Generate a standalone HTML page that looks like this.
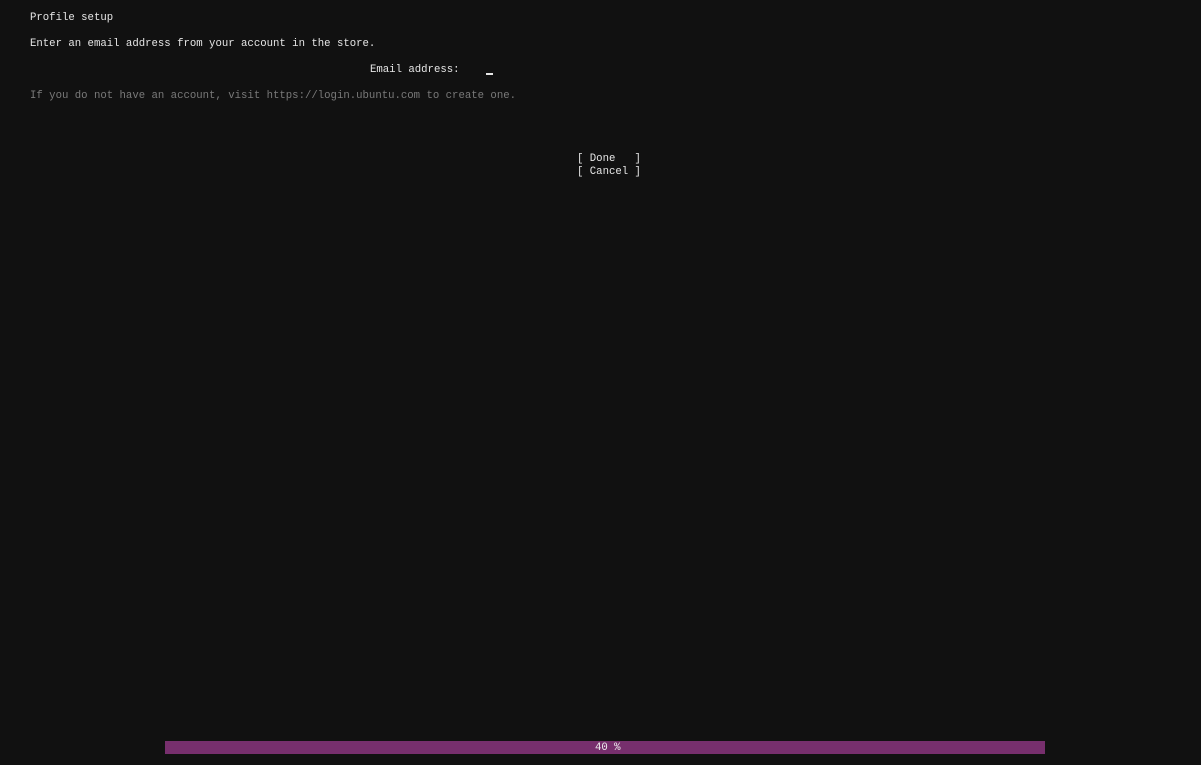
<!DOCTYPE html>
<html><head><style>
body{margin:0;width:1201px;height:765px;background:#111;overflow:hidden;position:relative;font-family:"Liberation Mono",monospace;font-size:10.67px;color:#e6e6e6;}
.t{position:absolute;white-space:pre;line-height:13px;}
.g{color:#7a7a7a;}
.bar{position:absolute;left:165px;top:741px;width:880px;height:13px;background:#772f6d;}
</style></head><body>
<div class="t" style="left:30px;top:12px">Profile setup</div>
<div class="t" style="left:30px;top:38px">Enter an email address from your account in the store.</div>
<div class="t" style="left:370px;top:64px">Email address:</div>
<div style="position:absolute;left:486px;top:73px;width:7px;height:2px;background:#e6e6e6"></div>
<div class="t g" style="left:30px;top:90px">If you do not have an account, visit https://login.ubuntu.com to create one.</div>
<div class="t" style="left:577px;top:153px">[ Done   ]
[ Cancel ]</div>
<div class="bar"></div>
<div class="t" style="left:595px;top:742px;color:#eee">40 %</div>
</body></html>
